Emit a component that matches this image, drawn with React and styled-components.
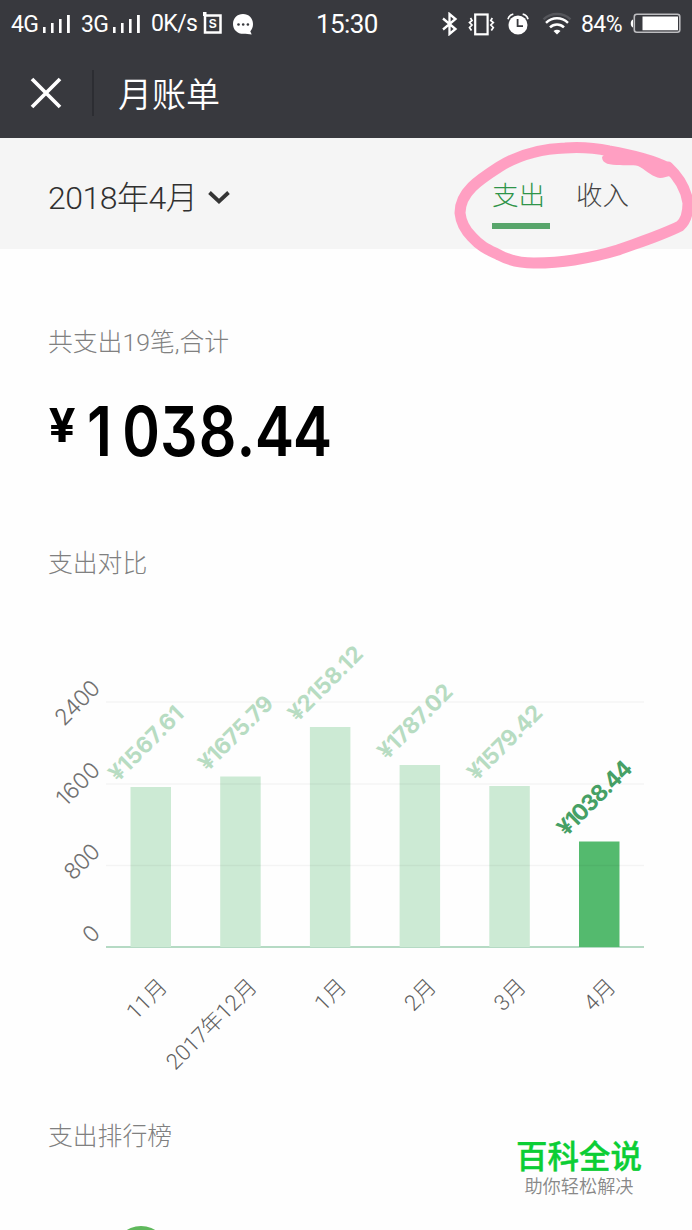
import React from 'react';
import styled, { createGlobalStyle } from 'styled-components';

const GlobalStyle = createGlobalStyle`
  * {
    box-sizing: border-box;
  }
  body {
    margin: 0;
    background: #fefefe;
    font-family: Roboto, 'Noto Sans CJK SC', sans-serif;
    overflow: hidden;
  }
  svg {
    display: block;
  }
`;

const bars = [
  { label: '11月', text: '¥1567.61', y: 787 },
  { label: '2017年12月', text: '¥1675.79', y: 776.5 },
  { label: '1月', text: '¥2158.12', y: 727 },
  { label: '2月', text: '¥1787.02', y: 765 },
  { label: '3月', text: '¥1579.42', y: 786 },
  { label: '4月', text: '¥1038.44', y: 841.5, active: true },
];

const ticks = [
  { text: '2400', y: 702, length: 53 },
  { text: '1600', y: 784, length: 51 },
  { text: '800', y: 865.5, length: 40 },
  { text: '0', y: 947, length: 13 },
];

const Signal = () => (
  <svg width="28" height="19" viewBox="0 0 28 19" fill="#fff">
    <rect x="0" y="12" width="2.6" height="6" />
    <rect x="8" y="8" width="2.6" height="10" />
    <rect x="16" y="4" width="2.6" height="14" />
    <rect x="24" y="0" width="2.8" height="18" />
  </svg>
);

const SquareS = () => (
  <svg width="20" height="23" viewBox="0 0 20 23">
    <path d="M2 3.5H17.5V20.5H2Z" fill="none" stroke="#fff" strokeWidth="2.5" />
    <path d="M0 0H3.5V4H0Z" fill="#fff" />
    <text x="9.8" y="16" textAnchor="middle" fontFamily="Liberation Sans" fontWeight="700" fontSize="12" fill="#fff">
      S
    </text>
  </svg>
);

const Chat = () => (
  <svg width="21" height="21" viewBox="0 0 21 21">
    <path
      d="M10 0C15.7 0 20 4 20 10C20 13 19 15.5 17.3 17.2L18.7 20.5L12.5 19.7C5.5 20.8 0 16.5 0 10C0 4 4.3 0 10 0Z"
      fill="#fff"
    />
    <circle cx="5.5" cy="10.5" r="1.3" fill="#38393e" />
    <circle cx="10.2" cy="10.5" r="1.3" fill="#38393e" />
    <circle cx="14.9" cy="10.5" r="1.3" fill="#38393e" />
  </svg>
);

const Bluetooth = () => (
  <svg width="16" height="24" viewBox="0 0 16 24" fill="none" stroke="#fff" strokeWidth="2.3">
    <path d="M1 6.5L13.5 17L7.5 22V2L13.5 7L1 17.5" />
  </svg>
);

const Vibrate = () => (
  <svg width="27" height="23" viewBox="0 0 27 23" fill="none" stroke="#fff">
    <rect x="7.2" y="1.5" width="12.4" height="19.8" strokeWidth="2.2" />
    <path d="M2.5 5L4 7.5L1.5 9.5L4 12L1.5 14.5L3.5 17.5" strokeWidth="1.7" />
    <path d="M24.3 5L22.8 7.5L25.3 9.5L22.8 12L25.3 14.5L23.3 17.5" strokeWidth="1.7" />
  </svg>
);

const Alarm = () => (
  <svg width="22" height="23" viewBox="0 0 22 23" fill="none">
    <circle cx="11" cy="12" r="9.5" fill="#fff" />
    <path
      d="M1 6.3C1.6 3.8 3.5 1.8 6.3 1.2M21 6.3C20.4 3.8 18.5 1.8 15.7 1.2"
      stroke="#fff"
      strokeWidth="1.7"
    />
    <path d="M10.6 6V13.2H16" stroke="#38393e" strokeWidth="1.8" />
  </svg>
);

const Wifi = () => (
  <svg width="30" height="24" viewBox="0 0 30 24" fill="none" strokeWidth="2.5">
    <path d="M1.5 7.3C9 .3 21 .3 28.5 7.3" stroke="#55565b" />
    <path d="M4 10.8C10.5 4.8 19.5 4.8 26 10.8" stroke="#fff" />
    <path d="M8 15.3C12 11.5 18 11.5 22 15.3" stroke="#fff" />
    <path d="M11.5 19C13.5 17.3 16.5 17.3 18.5 19L15 22.5Z" fill="#fff" />
  </svg>
);

const Battery = () => (
  <svg width="52" height="21" viewBox="0 0 52 21">
    <path d="M3 6.5C0 7 0 14 3 14.5Z" fill="#fff" />
    <rect x="4.3" y="1.3" width="45.5" height="18" rx="2.5" fill="none" stroke="#bdbdc0" strokeWidth="1.6" />
    <rect x="12.5" y="3.5" width="35.5" height="13.8" fill="#fff" />
  </svg>
);

const Chart = () => (
  <ChartSvg viewBox="0 630 692 455">
    <line x1="106" x2="644" y1="947" y2="947" className="axis" />
    {bars.map((bar, i) => {
      const x = 130.5 + i * 89.7;
      return (
        <g key={bar.label} className={bar.active ? 'active' : ''}>
          <rect className="bar" x={x} y={bar.y} width="40.5" height={947 - bar.y} />
          <text
            className="value"
            transform={`translate(${x - 12.5} ${bar.y - 4.5}) rotate(-45)`}
            textLength="95"
          >
            {bar.text}
          </text>
          <text
            className="month"
            transform={`translate(${x + 38} 988) rotate(-45)`}
            textAnchor="end"
          >
            {bar.label}
          </text>
        </g>
      );
    })}
    {ticks.map((tick) => (
      <g key={tick.text}>
        {tick.y < 947 && <line x1="106" x2="644" y1={tick.y} y2={tick.y} className="grid" />}
        <text
          className="tick"
          transform={`translate(101.5 ${tick.y - 12.5}) rotate(-45)`}
          textAnchor="end"
          textLength={tick.length}
        >
          {tick.text}
        </text>
      </g>
    ))}
  </ChartSvg>
);

const App = () => {
  return (
    <Page>
      <GlobalStyle />
      <Header>
        <StatusBar>
          <StatusText $w={26} $size={23}>4G</StatusText>
          <Slot $left={6}><Signal /></Slot>
          <StatusText $left={10} $w={26} $size={23}>3G</StatusText>
          <Slot $left={6}><Signal /></Slot>
          <StatusText $left={10} $w={46} $size={23} $up>0K/s</StatusText>
          <Slot $left={6} $up><SquareS /></Slot>
          <Slot $left={10}><Chat /></Slot>
          <StatusText $left={62} $w={62} $size={26} $up>15:30</StatusText>
          <Slot $left={64}><Bluetooth /></Slot>
          <Slot $left={10}><Vibrate /></Slot>
          <Slot $left={12}><Alarm /></Slot>
          <Slot $left={13}><Wifi /></Slot>
          <StatusText $left={9} $w={44} $size={23}>84%</StatusText>
          <Slot $left={5} $up><Battery /></Slot>
        </StatusBar>
        <TitleBar>
          <CloseButton aria-label="close">
            <svg width="32" height="32" viewBox="0 0 32 32" stroke="#fff" strokeWidth="3.7" fill="none">
              <path d="M2 2L30 30M30 2L2 30" />
            </svg>
          </CloseButton>
          <Divider />
          <Title>月账单</Title>
        </TitleBar>
      </Header>
      <FilterBar>
        <Month>
          2018年4月
          <svg width="22" height="16" viewBox="0 0 22 16" fill="none" stroke="#353535" strokeWidth="3.8">
            <path d="M1.5 2.5L11 11.5L20.5 2.5" />
          </svg>
        </Month>
        <Tabs>
          <Tab $active>支出</Tab>
          <Tab>收入</Tab>
        </Tabs>
      </FilterBar>
      <Content>
        <Label>共支出19笔,合计</Label>
        <Amount>
          <small>¥</small>
          <span><b>1</b>038<i>.</i>44</span>
        </Amount>
        <Label>支出对比</Label>
      </Content>
      <Chart />
      <Ranking>
        <Label>支出排行榜</Label>
        <Avatar />
      </Ranking>
      <Circled viewBox="0 0 252 140">
        <path d="M228 33C212 25 192 20 169 16C155 13 140 12 125 13C95 14 75 22 59 32C45 41 37 47 32 52C22 62 20 70 20 78C21 88 25 95 32 102C41 112 49 115 59 120C70 126 82 128 94 128C110 128 122 127 134 125C152 122 165 119 178 115C200 107 220 101 240 91C246 86 248 76 248 68C246 54 240 43 228 32" />
        <path
          className="blob"
          d="M162 22C162 29 170 30 180 30C188 31 195 29 200 32C208 37 213 42 220 43C224 43 227 41 232 41L232 31L200 19L170 14Z"
        />
      </Circled>
      <Watermark>
        <strong>百科全说</strong>
        <span>助你轻松解决</span>
      </Watermark>
    </Page>
  );
};

const Page = styled.main`
  position: relative;
  width: 692px;
  height: 1230px;
  overflow: hidden;
  display: flex;
  flex-direction: column;
  background: #fefefe;
`;

const Header = styled.header`
  height: 138px;
  flex: none;
  background: #38393e;
  color: #fff;
`;

const StatusBar = styled.div`
  display: flex;
  align-items: center;
  height: 48px;
  padding-left: 11px;
`;

const StatusText = styled.span`
  flex: none;
  width: ${({ $w }) => $w}px;
  margin-left: ${({ $left }) => $left || 0}px;
  padding-top: ${({ $up }) => ($up ? 0 : 2)}px;
  font-size: ${({ $size }) => $size}px;
  font-weight: 400;
  line-height: 30px;
  letter-spacing: -0.6px;
  white-space: nowrap;
`;

const Slot = styled.span`
  flex: none;
  margin-left: ${({ $left }) => $left}px;
  padding-bottom: ${({ $up }) => ($up ? 2 : 0)}px;
`;

const TitleBar = styled.div`
  display: flex;
  align-items: center;
  height: 90px;
  padding-left: 30px;
`;

const CloseButton = styled.button`
  padding: 0;
  border: 0;
  background: none;
`;

const Divider = styled.span`
  width: 2px;
  height: 46px;
  margin: 0 24px 0 30px;
  background: #2c2d32;
`;

const Title = styled.h1`
  margin: 0;
  padding-top: 4px;
  font-size: 34px;
  font-weight: 350;
  line-height: 50px;
`;

const FilterBar = styled.div`
  display: flex;
  justify-content: space-between;
  flex: none;
  height: 111px;
  padding: 0 58px 0 48px;
  background: #f5f5f5;
`;

const Month = styled.div`
  display: flex;
  align-items: center;
  height: 114px;
  color: #303030;
  font-size: 32px;
  font-weight: 300;
  letter-spacing: -0.5px;
  svg {
    margin: 6px 0 0 11px;
  }
`;

const Tabs = styled.nav`
  display: flex;
  gap: 26px;
  padding-top: 36px;
`;

const Tab = styled.span`
  height: 55px;
  width: 58px;
  padding-top: 2px;
  font-size: 26.5px;
  font-weight: 300;
  line-height: 40px;
  color: ${({ $active }) => ($active ? '#2f9449' : '#444')};
  border-bottom: 6px solid ${({ $active }) => ($active ? '#58a56b' : 'transparent')};
`;

const Content = styled.section`
  flex: none;
  height: 381px;
  padding: 75px 48px 0;
`;

const Label = styled.p`
  margin: 0;
  color: #808080;
  font-size: 24.8px;
  font-weight: 300;
  line-height: 38px;
`;

const Amount = styled.div`
  display: flex;
  height: 183px;
  padding-top: 26px;
  color: #000;
  font-family: Inter, sans-serif;
  font-weight: 600;
  small {
    width: 39px;
    padding-left: 1px;
    font-family: Roboto, sans-serif;
    font-size: 49px;
    line-height: 76px;
    font-weight: 700;
  }
  span {
    font-size: 69px;
    line-height: 86px;
    font-feature-settings: 'cv09', 'tnum';
    transform: scaleX(0.855);
    transform-origin: left;
  }
  b {
    display: inline-block;
    width: 41px;
    font-weight: 600;
    font-feature-settings: normal;
  }
  i {
    font-style: normal;
    font-feature-settings: normal;
  }
`;

const ChartSvg = styled.svg`
  flex: none;
  width: 692px;
  height: 455px;
  .grid {
    stroke: #000;
    stroke-opacity: 0.04;
    stroke-width: 1.5;
  }
  .axis {
    stroke: #b5dac4;
    stroke-width: 2;
  }
  .bar {
    fill: #ccead4;
  }
  .tick {
    font: 300 22.5px Inter, sans-serif;
    fill: #707070;
  }
  .value {
    font: 700 22.5px Inter, sans-serif;
    fill: #b7dcc2;
  }
  .month {
    font: 300 22px Roboto, 'Noto Sans CJK SC', sans-serif;
    fill: #606060;
  }
  .active .bar {
    fill: #54ba6e;
  }
  .active .value {
    fill: #46a065;
  }
`;

const Ranking = styled.section`
  flex: none;
  padding: 33px 48px 0;
`;

const Avatar = styled.div`
  width: 54px;
  height: 54px;
  margin: 70px 0 0 66px;
  border-radius: 50%;
  background: #5fb85c;
`;

const Circled = styled.svg`
  position: absolute;
  left: 440px;
  top: 135px;
  width: 252px;
  height: 140px;
  path {
    fill: none;
    stroke: #ff9fc2;
    stroke-width: 11;
    stroke-linecap: round;
    stroke-linejoin: round;
  }
  .blob {
    fill: #ff9fc2;
    stroke: none;
  }
`;

const Watermark = styled.div`
  position: absolute;
  left: 499px;
  top: 1137px;
  width: 160px;
  display: flex;
  flex-direction: column;
  align-items: center;
  font-family: 'Liberation Sans', 'Noto Sans CJK SC', sans-serif;
  strong {
    color: #0bce35;
    font-size: 31.5px;
    font-weight: 500;
    line-height: 40px;
    -webkit-text-stroke: 0.4px #0bce35;
  }
  span {
    color: #888;
    font-size: 18.2px;
    font-weight: 350;
    line-height: 21px;
  }
`;

export default App;
